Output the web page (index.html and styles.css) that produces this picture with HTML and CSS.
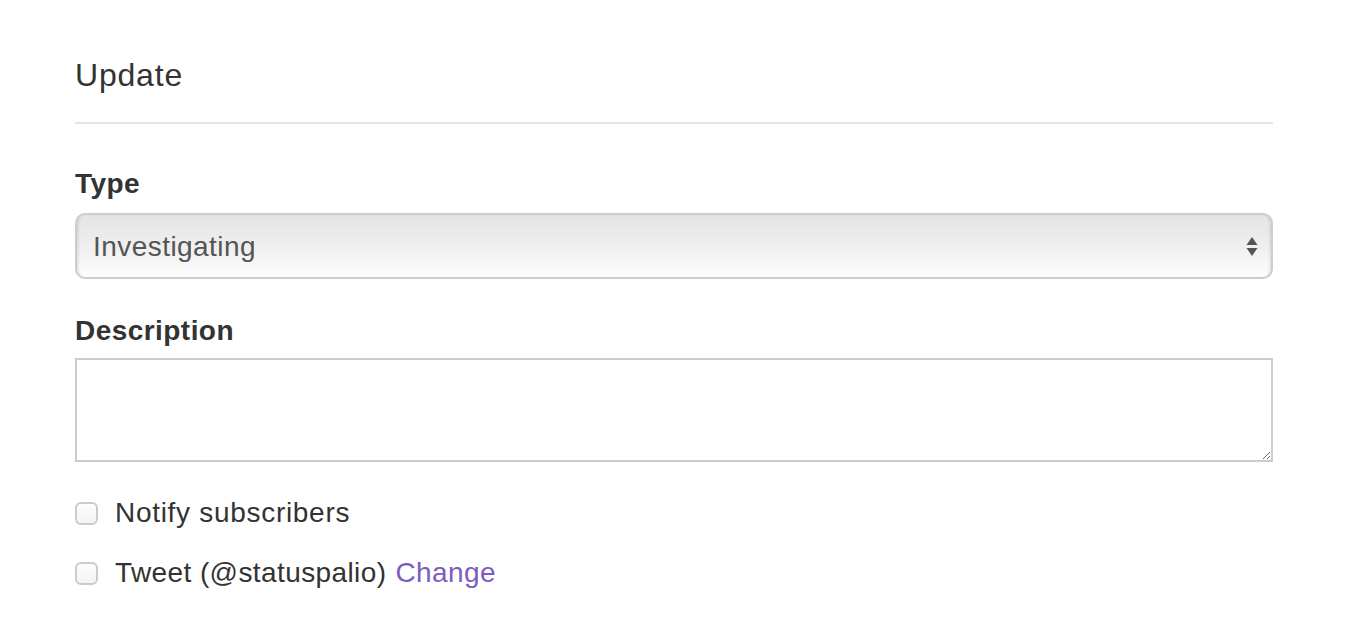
FILE: index.html
```html
<!DOCTYPE html>
<html lang="en">
<head>
  <meta charset="UTF-8">
  <title>Update</title>
  <link rel="stylesheet" href="styles.css">
</head>
<body>
  <div class="panel">
    <h4 class="panel-title">Update</h4>
    <hr class="divider">

    <form class="update-form">
      <label class="field-label" for="type">Type</label>
      <div class="select-wrap">
        <select id="type" class="select">
          <option>Investigating</option>
          <option>Identified</option>
          <option>Monitoring</option>
          <option>Resolved</option>
        </select>
        <svg class="select-arrows" width="12" height="22" viewBox="0 0 12 22">
          <path d="M6 2 L11.5 10 L0.5 10 Z" fill="#555"/>
          <path d="M0.5 13 L11.5 13 L6 21 Z" fill="#555"/>
        </svg>
      </div>

      <label class="field-label desc-label" for="desc">Description</label>
      <textarea id="desc" class="textarea"></textarea>

      <div class="check-row">
        <input type="checkbox" id="notify" class="check">
        <label for="notify">Notify subscribers</label>
      </div>
      <div class="check-row tweet-row">
        <input type="checkbox" id="tweet" class="check">
        <label for="tweet">Tweet (@statuspalio)</label>
        <a href="#" class="change-link">Change</a>
      </div>
    </form>
  </div>
</body>
</html>
```

FILE: styles.css
```css
body {
  margin: 0;
  padding: 55px 0 0 75px;
  background: #fff;
  color: #333;
  font-family: "Liberation Sans", Arial, sans-serif;
}

.panel {
  width: 1198px;
}

.panel-title {
  margin: 0;
  font-size: 32px;
  font-weight: normal;
  line-height: 40px;
  letter-spacing: 0.8px;
}

.divider {
  margin: 27px 0 0 0;
  border: 0;
  border-top: 2px solid #e5e5e5;
}

.update-form {
  margin-top: 40px;
}

.field-label {
  display: block;
  font-size: 28px;
  font-weight: bold;
  line-height: 40px;
  letter-spacing: 0.45px;
  margin-bottom: 9px;
}

.desc-label {
  margin-bottom: 7px;
}

.select-wrap {
  position: relative;
  height: 66px;
  margin-bottom: 32px;
}

.select {
  -webkit-appearance: none;
  appearance: none;
  width: 100%;
  height: 66px;
  padding: 0 16px;
  border: 2px solid #cdcdcd;
  border-radius: 10px;
  background: linear-gradient(#e4e4e4, #f0f0f0 55%, #fdfdfd);
  box-shadow: inset 3px 0 3px -2px rgba(0, 0, 0, 0.12), inset -3px 0 3px -2px rgba(0, 0, 0, 0.12);
  color: #555;
  font-family: "Liberation Sans", Arial, sans-serif;
  font-size: 28px;
  letter-spacing: 0.45px;
  outline: none;
}

.select-arrows {
  position: absolute;
  right: 15px;
  top: 22px;
  pointer-events: none;
}

.textarea {
  display: block;
  box-sizing: border-box;
  width: 100%;
  height: 104px;
  margin: 0 0 31px 0;
  border: 2px solid #cccccc;
  font-family: "Liberation Sans", Arial, sans-serif;
  font-size: 28px;
}

.check-row {
  display: flex;
  align-items: center;
  height: 40px;
  margin-bottom: 20px;
  font-size: 28px;
  line-height: 40px;
  letter-spacing: 0.7px;
}

.tweet-row {
  letter-spacing: 0.4px;
}

.check {
  -webkit-appearance: none;
  appearance: none;
  width: 23px;
  height: 23px;
  margin: 0 17px 0 0;
  border: 2px solid #cbcbcb;
  border-radius: 6px;
  background: linear-gradient(#fdfdfd, #f4f4f4);
  box-sizing: border-box;
}

.change-link {
  margin-left: 9px;
  color: #7d5cbf;
  text-decoration: none;
}
```
